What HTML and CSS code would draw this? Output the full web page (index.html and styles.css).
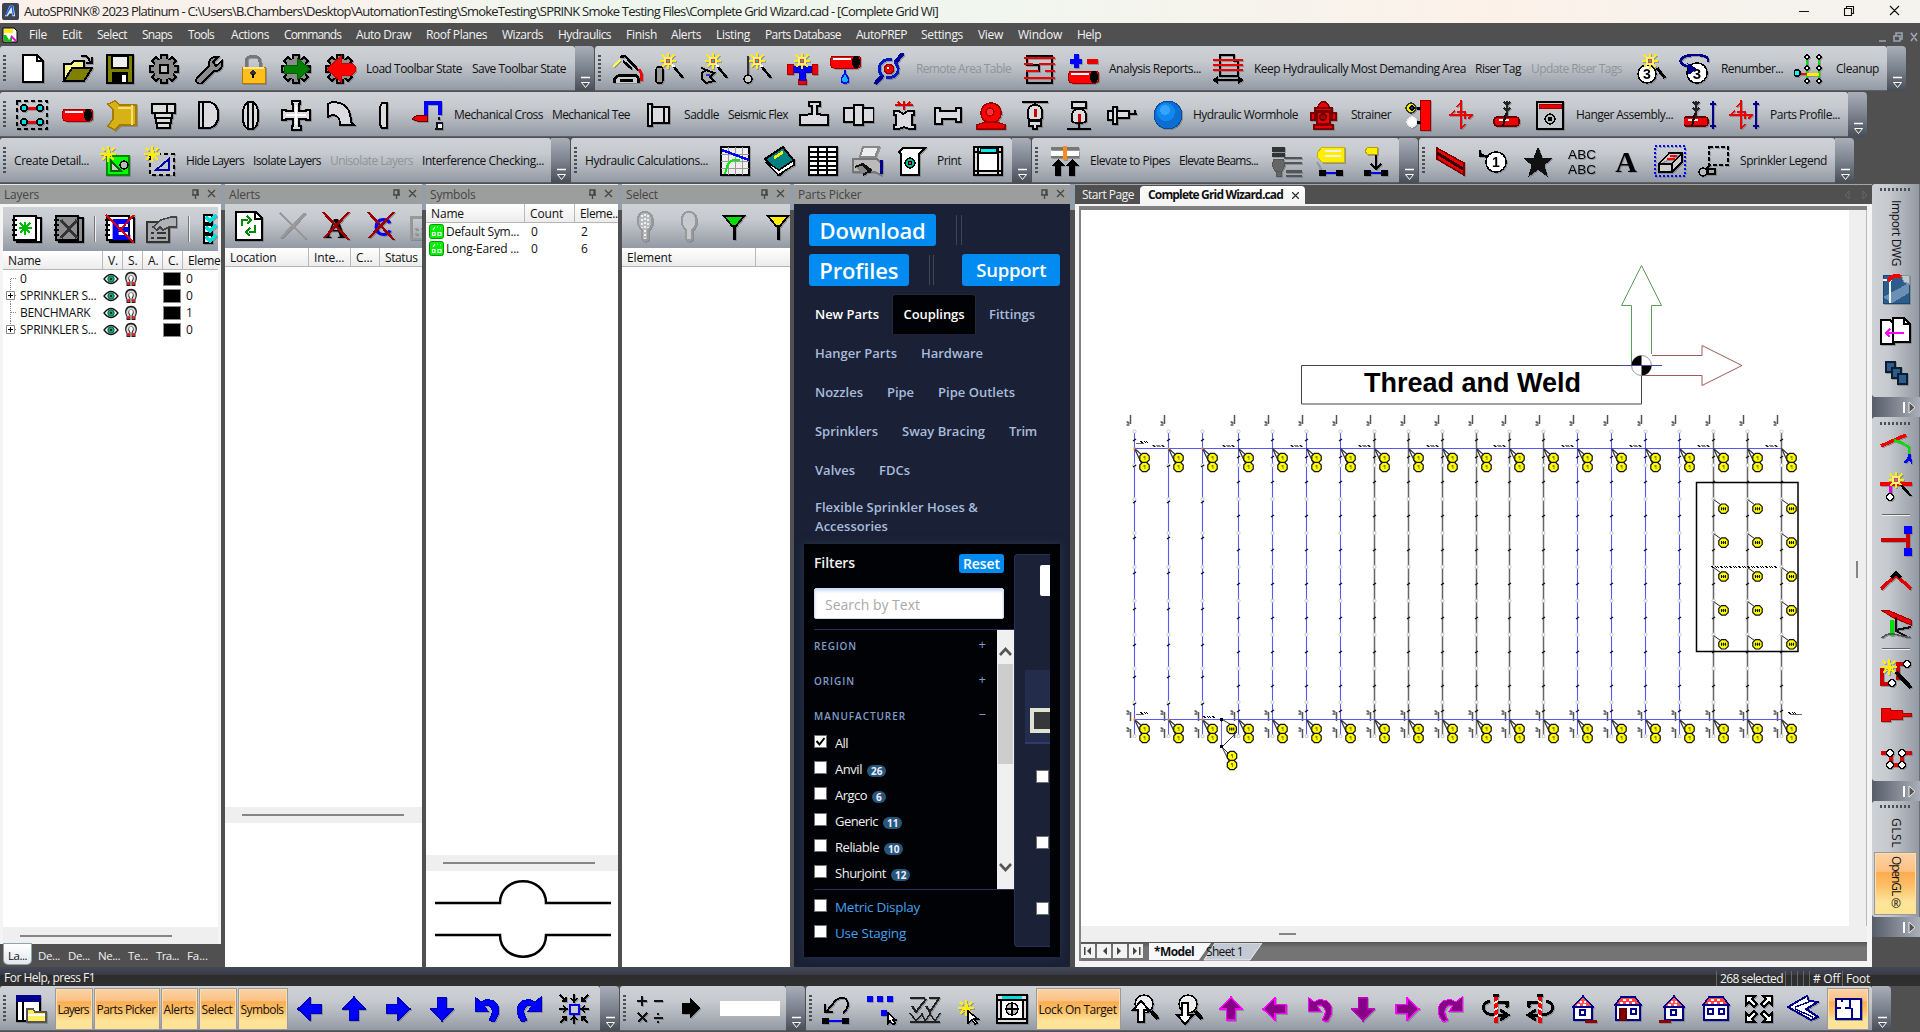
FILE: index.html
```html
<!DOCTYPE html>
<html lang="en">
<head>
<meta charset="utf-8">
<title>AutoSPRINK 2023 Platinum</title>
<link rel="stylesheet" href="styles.css">
</head>
<body>
<div class="app">
  <header class="titlebar">
    <svg class="app-logo" viewBox="0 0 18 18"><rect width="18" height="18" rx="2" fill="#3a4452"/><path d="M3 14 8 3h4l2 11h-3l-.5-3H8l-2 3z" fill="#dfe9f5"/><path d="M4 13 9 4h2l1 9" fill="none" stroke="#1c62d8" stroke-width="1.6"/></svg>
    <span class="title-text" data-w="914">AutoSPRINK® 2023 Platinum - C:\Users\B.Chambers\Desktop\AutomationTesting\SmokeTesting\SPRINK Smoke Testing Files\Complete Grid Wizard.cad - [Complete Grid Wi]</span>
    <svg class="win-ctl" viewBox="0 0 110 20"><path d="M4 10.500h10M49.500 7.500h7v7h-7zM51.500 7v-1.500h7v7h-2M95 5l9 9M104 5l-9 9" fill="none" stroke="#111" stroke-width="1.100"/></svg>
  </header>
  <nav class="menubar" id="menu">
    <svg class="doc-logo" viewBox="0 0 16 16"><path d="M1 1h11l3 3v11H1z" fill="#fff" stroke="#000"/><path d="M2 2h9v4H2z" fill="#ffef00"/><path d="M2 8h8v6H2z" fill="#00c800"/><path d="m4 8 3 5 3-5" fill="#fff"/><path d="m9 9 5 5" stroke="#f0c" stroke-width="2"/></svg>
  </nav>
  <div class="bar-row" id="row1"></div>
  <div class="bar-row" id="row2"></div>
  <div class="bar-row" id="row3"></div>

  <main class="work">
    <section class="panel layers">
      <h2><span>Layers</span><i class="pin"></i></h2>
      <div class="layers-frame">
        <div class="ptools" data-icons="-3:27 nbnew:44 nbx:40 |:12 nbe:38 props:44 |:12 checks:44"></div>
        <div class="lhead"><b>Name</b><b>V.</b><b>S.</b><b>A.</b><b>C.</b><b>Eleme</b></div>
        <div class="tree" id="tree"></div>
        <div class="hscroll"><i></i></div>
      </div>
      <div class="ptabs"><span class="on" data-w="19">La...</span><span data-w="22">De...</span><span data-w="22">De...</span><span data-w="22">Ne...</span><span data-w="20">Te...</span><span data-w="23">Tra...</span><span data-w="21">Fa...</span></div>
    </section>
    <section class="panel alerts">
      <h2><span>Alerts</span><i class="pin"></i></h2>
      <div class="ptools" data-icons="refresh:48 xgray:40 xa:46 xc:44 propsoff:44"></div>
      <div class="lhead"><b>Location</b><b>Inte...</b><b>C...</b><b>Status</b></div>
      <div class="fill"></div>
      <div class="hscroll"><i></i></div>
      <div class="lower"></div>
    </section>
    <section class="panel symbols">
      <h2><span>Symbols</span><i class="pin"></i></h2>
      <div class="lhead"><b>Name</b><b>Count</b><b>Eleme...</b></div>
      <div class="srow"><svg viewBox="0 0 15 15"><use href="#sym"/></svg><span data-w="73">Default Sym...</span><span>0</span><span>2</span></div>
      <div class="srow"><svg viewBox="0 0 15 15"><use href="#sym"/></svg><span data-w="73">Long-Eared ...</span><span>0</span><span>6</span></div>
      <div class="fill"></div>
      <div class="hscroll"><i></i></div>
      <svg class="preview" viewBox="0 0 192 96"><path d="M9 32h65c0-29 46-29 46 0h65M9 64h65c0 29 46 29 46 0h65" fill="none" stroke="#000" stroke-width="2.500"/></svg>
    </section>
    <section class="panel select">
      <h2><span>Select</span><i class="pin"></i></h2>
      <div class="ptools" data-icons="-1:3 bulb1:44 bulb2:44 fungreen:44 funyellow:44"></div>
      <div class="lhead"><b>Element</b><b></b></div>
      <div class="fill"></div>
    </section>
    <section class="panel picker">
      <h2><span>Parts Picker</span><i class="pin"></i></h2>
      <div class="pk">
        <div class="pk-btns">
          <button class="big w1"><span data-w="106">Download</span></button><i class="bars"></i>
        </div>
        <div class="pk-btns">
          <button class="big w2"><span data-w="79">Profiles</span></button><i class="bars"></i><button class="w3"><span data-w="70">Support</span></button>
        </div>
        <div class="cats">
          <div><a class="hot" data-w="64">New Parts</a><a class="cur"><span data-w="61">Couplings</span></a><a data-w="46">Fittings</a></div>
          <div><a data-w="82">Hanger Parts</a><a data-w="62">Hardware</a></div>
          <div><a data-w="48">Nozzles</a><a data-w="27">Pipe</a><a data-w="77">Pipe Outlets</a></div>
          <div><a data-w="63">Sprinklers</a><a data-w="83">Sway Bracing</a><a data-w="28">Trim</a></div>
          <div><a data-w="40">Valves</a><a data-w="31">FDCs</a></div>
          <div class="two"><a><span data-w="163">Flexible Sprinkler Hoses &amp;</span><br><span data-w="73">Accessories</span></a></div>
        </div>
        <div class="filters">
          <div class="fcol">
            <div class="ftop"><b data-w="41">Filters</b><button><span data-w="37">Reset</span></button></div>
            <div class="search"><span data-w="95">Search by Text</span></div>
            <div class="fscroll">
              <div class="flist">
                <h3><span data-w="43">REGION</span><i>+</i></h3>
                <h3><span data-w="41">ORIGIN</span><i>+</i></h3>
                <h3><span data-w="92">MANUFACTURER</span><i>−</i></h3>
                <label><i class="cb ck"></i><span data-w="13">All</span></label>
                <label><i class="cb"></i><span data-w="27">Anvil</span><em>26</em></label>
                <label><i class="cb"></i><span data-w="32">Argco</span><em>6</em></label>
                <label><i class="cb"></i><span data-w="43">Generic</span><em>11</em></label>
                <label><i class="cb"></i><span data-w="44">Reliable</span><em>10</em></label>
                <label><i class="cb"></i><span data-w="51">Shurjoint</span><em>12</em></label>
              </div>
              <div class="vbar"><svg viewBox="0 0 17 34"><path d="m3 25 5.500-6 5.500 6" fill="none" stroke="#555" stroke-width="2.600"/></svg><i></i><svg viewBox="0 0 17 34"><path d="m3 9 5.500 6 5.500-6" fill="none" stroke="#555" stroke-width="2.600"/></svg></div>
            </div>
            <label class="blue"><i class="cb"></i><span data-w="85">Metric Display</span></label>
            <label class="blue"><i class="cb"></i><span data-w="71">Use Staging</span></label>
          </div>
          <div class="rcol"><i class="wbox"></i><div class="hl"><i></i></div><i class="cb"></i><i class="cb"></i><i class="cb"></i></div>
        </div>
      </div>
    </section>
    <section class="doc">
      <div class="dtabs"><span class="st" data-w="52">Start Page</span><span class="act"><b data-w="135">Complete Grid Wizard.cad</b><svg viewBox="0 0 8 8"><path d="m0 0 8 8M8 0 0 8" stroke="#333" stroke-width="1.500"/></svg></span><svg class="arrs" viewBox="0 0 24 10"><path d="M5 1v8L1 5zM19 1v8l4-4z" fill="none" stroke="#666"/></svg></div>
      <div class="frame">
        <div class="canvas-wrap">
          <svg id="cad" viewBox="1081 210 768 716"></svg>
          <div class="cvbar"><i></i></div>
        </div>
        <div class="chbar"><i></i></div>
        <div class="sheets">
          <svg viewBox="0 0 62 15"><g fill="#f3f3f3"><path d="M0 0h14v14H0zM16 0h14v14H16zM32 0h14v14H32zM48 0h14v14H48z"/></g><path d="M3 3h1.500v8H3zM10 3v8L6 7zM26 3v8l-4-4zM36 3v8l4-4zM52 3v8l4-4zM58 3h1.500v8H58z" fill="#444"/></svg>
          <svg class="sheet-tabs" viewBox="0 0 114 18"><path d="M55 17h46l12-17H66z" fill="#c3cad4" stroke="#eee"/><path d="M0 0h62L50 17H0z" fill="#f7f8fb"/></svg>
          <b class="m" data-w="40">*Model</b><span class="s" data-w="37">Sheet 1</span>
        </div>
      </div>
    </section>
    <aside class="side" id="side"></aside>
  </main>

  <div class="status"><span data-w="91">For Help, press F1</span><span class="grow"></span><span class="cell" data-w="63">268 selected</span><i></i><i></i><i></i><i></i><span class="cell" data-w="27"># Off</span><span class="cell" data-w="24">Foot</span></div>
  <div class="bar-row bottom" id="row4"></div>
</div>
<svg class="defs"><defs><g id="sym"><rect x=".5" y=".5" width="14" height="14" rx="2" fill="#00f000" stroke="#009c00"/><path d="M3.500 8.500h2.500v3h-2.500zM9 8.500h3v3H9zM4 6l2-3M8 3h1M11 4h1" stroke="#fff" fill="none" stroke-width="1.200"/></g></defs></svg>
<script src="main.js"></script>
</body>
</html>
```
FILE: styles.css
```css
* { box-sizing: border-box; }
body { margin: 0; background: #505050; font: 12px/1 "Open Sans", "Noto Sans", sans-serif; color: #111; overflow: hidden; }
.app { width: 1920px; height: 1032px; display: flex; flex-direction: column; overflow: hidden; }
.defs { display: none; }
span, b { white-space: nowrap; }
i { font-style: normal; }

.titlebar { height: 23px; display: flex; align-items: center; padding-left: 2px; background: linear-gradient(90deg, #fbf0ea 0, #f8f2ec 18%, #eff6ee 30%, #f0f6ee 50%, #f6f3ec 66%, #fcf1e9 78%, #f6f2ec 90%, #f5f3ee 100%); }
.app-logo { width: 17px; height: 17px; }
.title-text { margin-left: 5px; font-size: 13px; color: #222; }
.win-ctl { width: 110px; height: 20px; margin-left: auto; margin-right: 15px; margin-bottom: 2px; }
.menubar { height: 23px; background: #505050; color: #f2f2f2; display: flex; align-items: center; padding-left: 2px; }
.doc-logo { width: 16px; height: 16px; margin-right: 11px; }
.mdi { margin-left: auto; margin-right: 1px; width: 40px; height: 12px; position: relative; top: 2px; }

.bar-row { height: 46px; display: flex; padding-bottom: 1px; gap: 1px; background: #505050; border-bottom: 0; }
.tb { display: flex; height: 45px; }
.tb-body { display: flex; align-items: center; background: linear-gradient(#ced1d6, #c6c9ce 35%, #b0b5bd 65%, #939aa4); border-radius: 3px 3px 0 0; border-bottom: 1px solid #59616d; overflow: hidden; padding-top: 1px; }
.tb svg, .side svg, .ptools svg { width: 32px; height: 32px; flex: none; display: block; filter: drop-shadow(1px 1px 0 rgba(110, 112, 116, .55)); }
.tb .grip { width: 3px; height: 28px; flex: none; background: repeating-linear-gradient(#4a4f57 0 2px, transparent 2px 4px); }
.tb .off { color: #909498; }
.tb-end { width: 19px; background: linear-gradient(#a9afb9, #7b838f 50%, #474d57); border-radius: 0 4px 0 0; padding-left: 1px; }
.tb .tb-end svg { width: 19px; height: 45px; filter: none; position: relative; top: 1px; }
.tb .label { display: block; line-height: 16px; flex: none; padding-top: 1px; }
.on-btn { height: 42px; flex: none; display: flex; align-items: center; justify-content: center; border: 1px solid #9a9b96; background: linear-gradient(#fbd2a6, #fcc183 30%, #fdac50 32%, #fdc168 55%, #fde49a 80%, #ffe48c); box-shadow: inset 0 0 0 1px #fddcae; }
.on-btn span { position: relative; left: -1px; top: 1px; }
.field { background: #fff; height: 15px; flex: none; }

.work { flex: 1; min-height: 0; display: flex; height: 783px; background: linear-gradient(#949eaa 0 26px, #505050 26px); }
.panel { display: flex; flex-direction: column; height: 783px; flex: none; background: #fff; margin-right: 4px; overflow: hidden; }
.panel h2 { margin: 0; height: 20px; flex: none; background: #9b9e9d; border-top: 1px solid #e8e8e8; font: 12px/19px "Open Sans", sans-serif; color: #454545; padding: 0 5px 0 4px; display: flex; justify-content: space-between; letter-spacing: -.2px; }
.pin svg { width: 26px; height: 18px; display: block; }
.layers { width: 221px; background: #505050; }
.alerts { width: 197px; margin-right: 4px; }
.symbols { width: 192px; }
.select { width: 168px; }
.picker { width: 276px; background: #1a2136; }
.layers-frame { border: 3px solid #f4f4f4; border-top-width: 3px; height: 740px; display: flex; flex-direction: column; background: #fff; border-bottom-width: 0; }
.ptools { height: 44px; flex: none; display: flex; align-items: center; background: linear-gradient(#ced1d6, #c6c9ce 35%, #939aa4); overflow: hidden; }
.ptools span { display: flex; justify-content: center; flex: none; }
.ptools .vs { width: 2px; height: 26px; background: #eee; border-left: 1px solid #777; }
.lhead { height: 19px; flex: none; display: flex; background: linear-gradient(#fff, #ececec); border-bottom: 1px solid #b5b5b5; }
.lhead b { font-weight: 400; line-height: 19px; border-right: 1px solid #b9b9b9; padding-left: 5px; flex: none; overflow: hidden; font-size: 12px; letter-spacing: -.15px; }
.layers .lhead b { width: 20px; }
.layers .lhead b:first-child { width: 100px; }
.layers .lhead b:last-child { width: 40px; border: 0; letter-spacing: -.4px; }
.alerts .lhead b:nth-child(1) { width: 84px; }
.alerts .lhead b:nth-child(2) { width: 42px; }
.alerts .lhead b:nth-child(3) { width: 29px; }
.alerts .lhead b:nth-child(4) { width: 44px; border: 0; letter-spacing: -.4px; }
.symbols .lhead b:nth-child(1) { width: 99px; }
.symbols .lhead b:nth-child(2) { width: 50px; }
.symbols .lhead b:nth-child(3) { border: 0; letter-spacing: -.4px; }
.select .lhead b:first-child { width: 134px; }
.select .lhead b:last-child { border: 0; }
.tree { flex: 1; }
.trow { display: flex; height: 17px; align-items: center; }
.trow svg.br { width: 17px; height: 17px; }
.trow .nm { width: 83px; letter-spacing: -.3px; }
.trow svg.ey { width: 16px; height: 12px; }
.trow svg.mg { width: 16px; height: 16px; margin-left: 4px; }
.trow .sw { width: 18px; height: 14px; background: #000; border: 1px solid #8a8a8a; margin: 0 5px 0 24px; }
.hscroll { height: 17px; flex: none; background: #efefef; display: flex; align-items: center; padding-left: 17px; }
.hscroll i { width: 152px; height: 2px; background: #858585; }
.alerts .fill { height: 540px; flex: none; }
.alerts .hscroll i { width: 162px; }
.alerts .hscroll { height: 16px; }
.symbols .hscroll { height: 16px; }
.fill { flex: 1; }
.lower { flex: 1; }
.srow { height: 17px; display: flex; align-items: center; }
.srow svg { width: 15px; height: 15px; margin: 0 2px 0 3px; }
.srow span:nth-of-type(1) { width: 85px; }
.srow span:nth-of-type(2) { width: 50px; }
.preview { width: 192px; height: 96px; flex: none; }
.ptabs { display: flex; color: #f2f2f2; padding-left: 4px; height: 23px; align-items: flex-start; }
.ptabs span { padding: 6px 4px 0; height: 20px; font-size: 11.500px; }
.ptabs .on { background: linear-gradient(#fff, #e3e8ee); color: #111; border-radius: 0 0 4px 4px; box-shadow: 0 0 0 1px #8fa3a8; margin-right: 3px; }

.pk { padding: 10px 10px 0; font-family: "Open Sans", sans-serif; height: 763px; }
.pk button { background: #028bf0; border: 0; border-radius: 3px; color: #fff; font: 600 18.500px/32px "Open Sans", sans-serif; height: 32px; padding: 0; text-align: center; overflow: hidden; }
.pk button.big { font-size: 22px; line-height: 33px; }
.pk-btns { display: flex; height: 40px; padding-left: 5px; }
.w1 { width: 127px; } .w2 { width: 100px; } .w3 { width: 98px; margin-left: 28px; }
.bars { width: 6px; height: 30px; margin: 1px 0 0 20px; border: solid #3d4658; border-width: 0 1px; }
.cats { height: 250px; font-weight: 600; font-size: 13px; color: #a9bbdb; }
.cats > div { display: flex; height: 39px; gap: 24px; padding-left: 11px; align-items: center; }
.cats > div:first-child { height: 40px; gap: 13px; }
.cats a { white-space: nowrap; }
.cats .hot { color: #fff; }
.cats .cur { background: #010205; color: #fff; width: 84px; height: 40px; line-height: 39px; text-align: center; border: 1px solid #23293a; border-bottom: 0; border-radius: 4px 4px 0 0; }
.cats > .two { line-height: 19px; height: 38px; margin-top: 8px; }
.filters { display: flex; height: 413px; background: #010205; box-shadow: 0 0 8px #28324c; color: #f1f1f1; padding: 10px; }
.fcol { width: 200px; flex: none; }
.ftop { display: flex; height: 34px; justify-content: space-between; padding-right: 10px; }
.ftop b { font-weight: 600; font-size: 14px; line-height: 17px; }
.pk .ftop button { width: 45px; height: 19px; font-size: 14px; line-height: 18px; }
.search { width: 190px; height: 31px; background: #fff; border: 1px solid #cfdcf2; border-radius: 2px; box-shadow: inset 0 2px 3px #cfdcf5; color: #a9a9a9; font-size: 14px; line-height: 31px; padding-left: 10px; margin-bottom: 10px; }
.fscroll { display: flex; height: 261px; border: solid #263157; border-width: 1px 0; }
.flist { width: 183px; }
.flist h3 { margin: 0; height: 35px; display: flex; justify-content: space-between; padding-right: 11px; color: #7f9dcb; font: 600 10px/33px "Open Sans", sans-serif; }
.flist h3 i { font-size: 13px; font-weight: 400; line-height: 29px; }
.filters label { display: flex; height: 26px; align-items: flex-start; font-size: 13px; }
.filters label span { margin-left: 8px; line-height: 17px; }
.cb { width: 13px; height: 13px; background: #fff; border: 1px solid #707070; flex: none; display: block; }
.cb svg { display: block; width: 11px; height: 11px; }
.filters em { font: 700 10px/12px "Open Sans", sans-serif; background: #27567a; border-radius: 7px; padding: 0 4px; margin: 4px 0 0 5px; color: #eef; }
.filters .blue { color: #45a1ee; font-size: 13.500px; }
.fscroll + .blue { margin-top: 9px; }
.vbar { width: 17px; background: #f0f0f0; display: flex; flex-direction: column; }
.vbar svg { width: 17px; height: 34px; }
.vbar i { height: 100px; background: #cdcdcd; margin: 0 1px 91px; }
.rcol { flex: 1; background: #1b2238; border: 1px solid #263157; border-right: 0; border-radius: 4px 0 0 4px; overflow: hidden; padding-top: 10px; }
.wbox { display: block; width: 10px; height: 31px; background: #fff; margin-left: 25px; border-radius: 2px 0 0 2px; }
.hl { height: 74px; background: #232c4b; margin: 74px 0 26px 10px; border-bottom: 2px solid #2f3b68; padding: 38px 0 0 5px; }
.hl i { display: block; height: 25px; border: 4px solid #dfe3d2; border-right: 0; background: #36373a; }
.rcol .cb { margin: 0 0 53px 21px; }

.doc { width: 797px; height: 783px; flex: none; display: flex; flex-direction: column; margin-left: 1px; }
.dtabs { height: 20px; background: #505050; border-top: 1px solid #a5a5a5; display: flex; align-items: center; color: #f2f2f2; padding: 1px 0 0 7px; }
.dtabs .st { margin-right: 6px; }
.dtabs .act { background: linear-gradient(#fff, #f4f4f4); color: #111; width: 165px; height: 18px; border-radius: 4px 4px 0 0; display: flex; align-items: center; padding-left: 8px; gap: 9px; }
.dtabs .act svg { width: 7px; height: 7px; }
.arrs { width: 24px; height: 10px; margin-left: auto; margin-right: 4px; }
.frame { height: 763px; border: solid #f4f4f4; border-width: 2px 5px 6px 4px; box-shadow: inset 2px 4px 0 #818181, inset 0 0 0 1px #bbb; padding: 4px 0 0 2px; background: #efefef; }
.canvas-wrap { display: flex; height: 716px; }
#cad { width: 768px; height: 716px; background: #fff; display: block; }
.cvbar { width: 17px; background: #efefef; display: flex; align-items: center; padding: 2px 0 0 7px; }
.cvbar i { width: 2px; height: 17px; background: #858585; }
.chbar { height: 16px; background: #efefef; padding: 7px 0 0 198px; }
.chbar i { display: block; width: 17px; height: 2px; background: #858585; }
.sheets { height: 19px; background: linear-gradient(#555, #747474 30%); display: flex; align-items: center; }
.sheets > svg:first-child { width: 62px; height: 15px; }
.sheet-tabs { width: 114px; height: 18px; margin-left: 6px; margin-right: -109px; }
.sheets b, .sheets span { position: relative; line-height: 16px; }
.sheets .s { margin-left: 12px; }

.side { width: 48px; margin-left: 0; background: #505050; flex: none; }
.side-tb { width: 48px; display: flex; flex-direction: column; align-items: center; background: linear-gradient(90deg, #ced1d6, #c6c9ce 35%, #939aa4); border-radius: 3px 0 0 3px; overflow: hidden; border-right: 1px solid #69717c; }
.side .grip { width: 31px; height: 3px; flex: none; background: repeating-linear-gradient(90deg, #4a4f57 0 2px, transparent 2px 4px); }
.side .sep { width: 28px; height: 2px; background: #eee; border-top: 1px solid #666; flex: none; }
.side .vt { writing-mode: vertical-rl; line-height: 16px; width: 16px; flex: none; }
.side .vt span { left: 0; top: 0; }
.side .on-btn { width: 43px; height: 63px; }
.side-end { height: 20px; background: linear-gradient(90deg, #565d68, #a9afb9); }
.side .side-end svg { width: 48px; height: 20px; filter: none; }

.status { height: 19px; flex: none; background: linear-gradient(#454957, #383b45 40%, #2c2c2c 45%, #303030); display: flex; align-items: center; color: #f2f2f2; padding: 3px 48px 0 4px; }
.status .grow { flex: 1; }
.status i { width: 6px; height: 15px; border-left: 1px solid #666; }
.status .cell { border-left: 1px solid #666; padding-left: 3px; line-height: 15px; margin-right: 2px; }
.bottom { background: #505050; }
```
FILE: main.js
```js
const p = (d, f = 'none', s = '#000', w = 2) => `<path d="${d}" fill="${f}" stroke="${s}" stroke-width="${w}"/>`;
const c = (x, y, r, f = '#fff', s = '#000', w = 1.500) => `<circle cx="${x}" cy="${y}" r="${r}" fill="${f}" stroke="${s}" stroke-width="${w}"/>`;
const r = (x, y, w, h, f = '#fff', s = '#000', k = 2) => `<rect x="${x}" y="${y}" width="${w}" height="${h}" fill="${f}" stroke="${s}" stroke-width="${k}"/>`;
const g = (t, s) => `<g transform="${t}">${s}</g>`;
const tx = (x, y, z, s, k = '') => `<text x="${x}" y="${y}" font-size="${z}" font-weight="700" text-anchor="middle" font-family="Liberation Sans" ${k}>${s}</text>`;
const star = (x, y, mid = 1) => g(`translate(${x} ${y})`, p('M0-8V-4M0 4V8M-8 0h4M4 0h4M-6-6l3 3M3 3l3 3M6-6 3-3M-3 3l-3 3', 'none', '#ffee00', 2) + (mid ? r(-3, -3, 6, 6, '#f33', '#fff176', 1.500) + r(-1, -1, 2, 2, '#0cc', 'none', 0) : p('M0-4V4M-4 0h8', 'none', '#ffee00', 3)));
const wand = p('M19 12l3 2', 'none', '#fff', 2) + p('M21 14l9 11', 'none', '#000', 2.500);
const gear = g('translate(16 16)', [0, 45, 90, 135].map(a => `<g transform="rotate(${a})">${r(-3, -14, 6, 28, '#8c8c8c', '#000', 1.800)}</g>`).join('') + c(0, 0, 10, '#8c8c8c', '#8c8c8c', 1));
const pipe = (y, x = 1) => p(`M${x + 4} ${y}h24c4 0 4 12 0 12h-24c-5 0-5-12 0-12`, '#f00', '#900', 1) + p(`M${x + 3} ${y + 3}h18`, 'none', '#fff', 1.800) + `<ellipse cx="${x + 26}" cy="${y + 6}" rx="4" ry="6"/>`;
const arrow = (a, f, e) => g(`rotate(${a} 16 16)`, p('M16 4 27 16h-6.500v11h-9V16H5z', f, e, 1.500));
const undo = (f, e) => p('M5 4v14h13l-4-5c8-2 11 6 5 14l5 2c9-11 5-24-9-22l-4 2z', f, e, 1);
const flip = s => g('matrix(-1 0 0 1 32 0)', s);
const body = s => p(s, '#dcdce0', '#000', 2);
const house = s => p('M7 13h18v14H7z', '#fff', '#00008b', 2) + s;
const roofS = p('M6 14l10-11 10 11z', '#f55', '#00008b', 1.500) + p('M10 12h3M16 12h3M13 9h2M17 9h2', 'none', '#fff', 2);
const roofL = p('M3 12l6-8h14l6 8z', '#f44', '#00008b', 1.500) + p('M8 10h3M14 10h3M20 10h3M11 7h3M17 7h3', 'none', '#fff', 2);
const page = p('M6 2h14l6 6v21H6z', '#fff', '#000', 2) + p('M20 2v6h6');
const nb = (f = '#fff') => p('M6 5h24v24H6z', f, '#000', 2) + p('M3 3h22v24H3z', f, '#000', 2) + p('M1 7h5M1 12h5M1 17h5M1 22h5', 'none', '#000', 2);
const hanger = p('M16 2v16M13 3l3 3 3-3M13 9l3 3 3-3', 'none', '#222', 2) + p('M6 18h19c4 0 4 9 0 9H6c-4 0-4-9 0-9', '#e00', '#600', 1.500) + p('M8 21h10', 'none', '#fff', 1.500) + p('M15 14l-3 13', 'none', '#111', 2);
const cross = p('M16 1v29M4 16h24M16 3l-4 5M16 30l4-5M5 16l5-4M27 16l-4 4M12 13h8v7', 'none', '#e00', 1.500);
const funnel = f => p('M6 6h20l-8 10h-4z', f, '#000', 2) + p('M5 6h22', 'none', '#000', 2.500) + p('M16 16v14', 'none', '#000', 3);
const rot = p('M22 8c11 3 8 13-4 14H8', 'none', '#000', 3) + p('M3 9h12M6 15c-3-3 0-6 5-6M12 17l-8 5 8 5', 'none', '#000', 3) + p('M16 3v27', 'none', '#e00', 4) + p('M14 8l4 2M14 15l4 2M14 22l4 2', 'none', '#fff', 2) + p('M13 2h6', 'none', '#000', 3);
const dash = (s, d) => s.replace('/>', ` stroke-dasharray="${d}"/>`);

const I = {
  new: page,
  open: p('M3 28V11h7l3-3h10v6', '#fff68a', '#000') + p('M3 28l8-13h20l-8 13z', '#808000', '#000') + p('M20 3q7-2 9 6M31 4v6h-6', 'none', '#000', 1.800),
  save: p('M3 2h26v28H3z', '#808000', '#000') + r(8, 3, 16, 12, '#eee') + r(9, 20, 14, 9, '#000') + r(18, 22, 3, 6, '#fff', '#fff', 1),
  gear: gear + r(12, 12, 8, 8, '#bbb', '#000', 1.500),
  wrench: p('M4 25l12-12c-1-6 3-10 9-9l-5 5 3 4 6-5c1 7-3 11-8 10L9 30c-5 2-7-2-5-5z', '#8c8c8c', '#000', 1.800),
  lock: p('M9 16V9c0-8 14-8 14 0v7', 'none', '#777', 3) + r(5, 14, 23, 16, '#ffbf1c', '#b27a00', 1) + p('M6 15h21', 'none', '#ffe88b', 2) + c(16, 20, 2, '#333', '#333') + p('M16 21v4'),
  gearG: gear + p('M4 12h13V5l13 11-13 11v-7H4z', '#008000', '#006000', 1), gearR: gear + p('M28 10H17V3L3 16l14 13v-7h11l3-3v-6z', '#f00', '#c00', 1),
  torch: p('M2 14l7-7', 'none', '#ff4', 2.500) + p('M9 4l5-1 14 15M12 8l9 8', 'none', '#000', 2.500) + p('M3 30c0-6 4-8 8-8h11c5 0 6 4 6 8M9 27h13', '#ccc', '#000', 3) + p('M28 16l2 4v8', 'none', '#f00', 3),
  w1: p('M5 14h3c3 0 3 16 0 16H5c-3 0-3-16 0-16', '#999', '#000') + star(15, 8) + wand,
  w2: p('M4 15l4 1M5 20l4-3 8 3-4 4 4 4-8 2-4-4z', '#aaa', '#000') + p('M9 22h4', 'none', '#33c') + star(16, 8) + wand,
  w3: p('M7 3v18', 'none', '#333', 2) + c(7, 26, 4, '#ccc') + star(16, 8) + wand,
  w4: p('M1 11h6v10H1zM26 11h6v10h-6zM12 26h8v5h-8z', '#e00', '#a00', 1) + p('M7 13h18v6h-6v8h-6v-8H7z', '#00f', '#00a', 1) + star(16, 8),
  drop: pipe(3) + p('M16 17v5', 'none', '#00f') + p('M16 20c-6 8-4 10 0 10s6-2 0-10', '#0bf', '#00f', 1.500),
  orbit: p('M2 31l8-9M22 10l8-10', 'none', '#009', 4) + p('M9 23C2 14 9 5 19 7M22 9c7 9 1 17-9 15', 'none', '#0018c8', 3) + c(16, 16, 4.500, '#e00', '#800') + c(15, 15, 1, '#fff', '#fff', 0),
  ladder: p('M4 3h25v27H4V18h12v-6H4z', 'none', '#000', 2) + p('M1 5h31M1 11h9M16 11h16M3 18h13M22 18h10M1 25h31', 'none', '#e00', 1.500),
  plus: p('M9 1v14M3 8h12', 'none', '#00f', 5) + p('M20 8h11', 'none', '#e00', 5) + pipe(18),
  ladder2: p('M8 2h14v6h4v15H8z', 'none', '#000', 2) + p('M1 7h30M1 12h30M1 17h30', 'none', '#e00', 1.500) + p('M3 27h26M6 24l-4 3 4 3M26 24l4 3-4 3', 'none', '#000', 2),
  three: c(12, 21, 9) + tx(12, 26, 14, '3') + star(15, 8) + p('M22 15l8 10', 'none', '#000', 3),
  three2: c(18, 20, 10) + tx(18, 26, 15, '3') + p('M11 14c-14-2-12-12 4-12 11 0 15 2 14 7', 'none', '#00008b', 2.500) + p('M9 11l8 5-7 5z', '#00008b', '#00008b', 1),
  clean: p('M13 4v22M25 4v22', 'none', '#0d0', 1.800) + p('M4 21h9', 'none', '#f00', 2) + p('M13 21h12', 'none', '#fe0', 3) + c(3, 20, 3, '#0ff') + [4, 15, 28].map(y => c(13, y, 2) + c(25, y, 2)).join(''),
  hg: dash(p('M1 2h30v28H1z'), '4 3') + [9, 23].map(y => p(`M6 ${y}h20`, 'none', '#e00', 3) + c(8, y, 3, '#0dd') + c(24, y, 3, '#0dd')).join(''),
  pipe: pipe(10), yel: p('M3 5l7-3 5 4h16v20H15l-5 5-7-4 5-7V11z', '#d8b117', '#a47d00', 1.500) + p('M13 9h14M27 6v20', 'none', '#f7e070', 2),
  cap: p('M4 5h23v9H4zM7 14h17v5H7zM8 19h15v5H8zM9 24h13v5H9z', '#ddd', '#000', 2) + p('M19 5v9'),
  d: body('M6 3h9c14 0 14 26 0 26H6zM10 4v24'), oval: body('M13 3c-7 4-7 24 0 27h5c7-3 7-23 0-27zM13 4v25M18 4v25'),
  plusf: body('M12 2h8v3h-1v7h7v-1h4v10h-4v-1h-7v7h2v4h-9v-4h1v-7H6v1H2V11h4v1h7V5h-1z') + p('M16 6v20M6 16h20', 'none', '#fff', 2),
  elbow: body('M4 5l4-2c14 0 19 9 19 20l3 3H16c0-7-2-10-8-10l-4 2z'), slim: body('M14 4h5v25h-5l-2-3V8z'),
  hose: p('M15 18V4h14v12', 'none', '#00f', 3.500) + p('M1 20l5-4h10v6H6z', '#e00', '#600', 1) + p('M28 18v3M26 24h6v6h-6zM24 30h9', '#eee', '#111', 1.800),
  conn: body('M7 5h4v22H7zM11 8h12v16H11zM23 8h5v16h-5'), tee: body('M11 3h11v4h-3v8l7 1h4v10h-4H6H2V16h4l8-1V7h-3z'), union: body('M2 9h10v14H2zM12 6h9v20h-9zM21 9h11v14H21z'),
  valve: p('M7 6h18M16 2v9M10 3l3 3M22 3l-3 3', 'none', '#d00', 1.500) + body('M6 12h5l4 3 5-3h6v4h-2v10h3v4h-6l-5-2-5 2H6v-4h2V16H6z'), tee2: body('M3 9h5v3h16V9h5v14h-5v-3H10v5H3z'),
  alarm: c(16, 14, 10, '#f00', '#900') + c(15, 13, 4, '#f33', '#a00') + p('M2 30v-4l8-3h12l8 3v4z', '#e00', '#900', 1.500),
  spr1: p('M3 3h26M16 3v4', 'none', '#000') + p('M9 12c0-8 14-8 14 0v6c0 4-14 4-14 0z', '#ddd') + p('M16 10v8', 'none', '#c00', 3) + body('M10 22h12v5h-4v3h-4v-3h-4z'),
  spr2: body('M9 3h14v6H9z') + p('M9 16c0-8 14-8 14 0v5c0 4-14 4-14 0z', '#ddd') + p('M16 15v8', 'none', '#c00', 3) + p('M16 25v5M4 30h24'),
  side1: body('M2 12h5v9H2zM7 8h4v17H7zM11 12h12v7H11z') + p('M23 15h8M29 11v4', 'none', '#000'),
  ball: c(16, 16, 14, '#0a6fd0', '#0b4c98', 1) + c(14, 13, 9, '#1188ee', 'none', 0) + c(13, 11, 5, '#35a4ff', 'none', 0),
  hyd: p('M11 9c0-8 11-8 11 0zM8 9h17v3H8zM10 13h13v12H10zM7 26h19v4H7zM4 14h4v7H4zM25 14h4v7h-4z', '#e00', '#700', 1.800) + c(16, 18, 3, '#a00', '#600'),
  rb: r(16, 1, 10, 30, '#f00', '#900', 1) + c(7, 9, 5, '#ee0', '#333') + c(8, 9, 2, '#22a') + c(8, 23, 5, '#fff', '#eee') + p('M13 9h4M13 23h4', 'none', '#000', 3),
  cross, hanger, win: p('M3 3h26v27H3z', '#c4c7cb') + r(5, 5, 22, 4, '#e00', '#900', 1) + c(16, 20, 5, '#bbb') + c(16, 20, 1.500, '#000'),
  hangerB: g('translate(-4 0)', hanger) + p('M29 2v28M26 5h6M26 27h6', 'none', '#00008b', 2), crossB: g('translate(-3 0)', cross) + p('M28 2v28M25 5h6M25 27h6', 'none', '#00008b', 2),
  detG: p('M7 11h22v19H7z', '#0f0', '#080', 2) + p('M11 26V16l10 10z', '#ccc', '#060', 1.500) + c(24, 20, 4, '#bbb') + star(8, 9, 0),
  detB: dash(p('M6 9h24v21H6z', '#c2c5ca'), '4 3') + p('M12 25l13-11v11z', 'none', '#00a', 2) + star(8, 9, 0),
  chart: p('M2 2h28v28H2z', '#eee') + p('M9 2v28M16 2v28M23 2v28M2 9h28M2 16h28M2 23h28', 'none', '#999', 1) + p('M3 5l27 10', 'none', '#00f', 2.500) + p('M6 29q2-12 8-14l7 0', 'none', '#0e0', 2),
  book: p('M2 14L20 2l11 14-14 14z', '#008080', '#000') + p('M3 17l12 13 16-10v-5l-15 10z', '#fff', '#000', 1.500) + p('M11 13l9-6', 'none', '#fe0', 3),
  table: p('M2 2h28v28H2z', '#fff') + p('M2 7h28M2 12h28M2 16h28M2 21h28M2 25h28M11 2v28M20 2v28', 'none', '#000', 1.800),
  printer: p('M9 12l3-10h16l-4 10z', '#eee', '#888') + p('M2 14h24l4 4v12l-6-3H2z', '#bbb', '#777') + p('M4 22l8-3 8 6-8 5M12 20l8 8', '#888', '#111', 2) + p('M30 15v14', 'none', '#00008b', 3),
  scroll: p('M4 7l4-4h22l-6 6v21H6V9z', '#fff', '#000', 2) + c(15, 18, 5, '#0b9', '#000') + c(15, 18, 1.500, '#e33'),
  frame: p('M2 2h28v28H2z', '#ddd') + p('M2 7h28M2 26h28M6 2v28M26 2v28', 'none', '#000', 1.500) + r(8, 3, 16, 4, '#0ee', '#000', 1) + r(6, 8, 20, 18),
  elev: p('M2 3h28', 'none', '#777', 3) + p('M2 8h28', 'none', '#fff', 5) + p('M2 12h28', 'none', '#777', 2) + p('M16 1v14', 'none', '#ff8a1c', 4) + p('M9 14l7 7h-4v10H6V21H2zM23 14l7 7h-4v10h-6V21h-4z', '#000', '#000', 0),
  beams: p('M2 2h12v4H2zM2 8h12v3H2z', '#333', '#333', 1) + p('M4 14h9l2 6-3 6H5l-3-6zM6 26h5v5H6z', '#666', '#555', 1) + p('M16 26h16M16 31h16', 'none', '#555', 3) + p('M14 13h18M14 18h18', 'none', '#555', 2),
  tag: p('M3 8l5-6h22v15H8l-5-5z', '#ffee00', '#c8b400', 1) + p('M11 6h16M11 11h16', 'none', '#eee', 2) + p('M3 17l4 8', 'none', '#999', 1.500) + p('M9 28h16', 'none', '#00f', 2.500) + r(6, 26, 5, 4, '#000') + r(23, 26, 5, 4, '#000'),
  tag2: p('M6 6l3-4h9v7H8z', '#fe0', '#b89f00', 1) + p('M17 10v12M12 19l5 5 5-5', 'none', '#000', 2) + p('M11 28h14', 'none', '#00f', 2) + r(6, 26, 5, 4, '#000') + r(23, 26, 5, 4, '#000'),
  beam: p('M3 3l27 15v12L3 14z', '#e00', '#700', 1.500) + p('M3 8l26 16', 'none', '#300', 3),
  one: c(19, 17, 10) + tx(19, 22, 14, '1') + p('M10 12L3 9M3 5v6h6', 'none', '#000', 2.500), star: p('M16 3l4 10h10l-8 7 3 11-9-7-9 7 3-11-8-7h10z', '#111', '#111', 1),
  abc: tx(16, 14, 13.500, 'ABC', 'textLength="28"').replaceAll('"700"', '"400"') + tx(16, 29, 13.500, 'ABC', 'textLength="28"').replaceAll('"700"', '"400"'), A: tx(16, 27, 30, 'A').replace('Liberation Sans', 'Liberation Serif'),
  box: dash(p('M1 1h30v30H1z', 'none', '#00f', 2), '2 2') + p('M5 19L15 8h13v9L18 27H5zM5 19h13l10-11M18 19v8', '#ccc', '#000', 1.500) + p('M13 14h8M16 11h7', 'none', '#e00', 1.500),
  leg: dash(p('M11 2h19v18H11z'), '4 2') + c(5, 27, 4, '#bbb') + p('M10 24h7v5h-7zM12 20l-4 4', '#aaa'),
  wins: r(2, 3, 23, 25, '#fff') + r(2, 3, 23, 5, '#00008b', '#00008b') + p('M8 8v20') + p('M12 29V16h6l2 3h11v10z', '#ffee55', '#555', 1.500) + p('M13 22h17', 'none', '#fff', 2),
  L: arrow(-90, '#0000ff', '#0000c0'), U: arrow(0, '#0000ff', '#0000c0'), R: arrow(90, '#0000ff', '#0000c0'), D: arrow(180, '#0000ff', '#0000c0'), Z: undo('#0000ff', '#0000c0'), Y: flip(undo('#0000ff', '#0000c0')),
  pL: arrow(-90, '#850085', '#f0f'), pU: arrow(0, '#850085', '#f0f'), pR: arrow(90, '#850085', '#f0f'), pD: arrow(180, '#850085', '#b0b'), pZ: undo('#850085', '#f0f'), pY: flip(undo('#850085', '#f0f')),
  tgt: r(11.500, 11.500, 9, 9, '#ccc', '#00f') + p('M16 8V1M13 5l3 4 3-4M16 24v7M13 27l3-4 3 4M8 16H1M5 13l4 3-4 3M24 16h7M27 13l-4 3 4 3M2 2l6 6M8 4v4H4M30 2l-6 6M24 4v4h4M2 30l6-6M4 24h4v4M30 30l-6-6M28 24h-4v4', 'none', '#000', 1.500),
  math: p('M8 3v10M3 8h10M20 8h9M4 20l9 9M13 20l-9 9M20 25h9M24 20v2M24 28v2', 'none', '#111', 2), blk: p('M8 10h8V5l10 10-10 10v-5H8z', '#000', '#000', 1),
  ang: p('M9 28h14', 'none', '#00f', 2) + r(3, 26, 5, 4, '#000') + r(23, 26, 5, 4, '#000') + p('M6 19L16 7q9-6 12 3 0 6-5 10M5 11v8h8', 'none', '#000', 2),
  dots: p('M2 3h6v6H2zM12 3h6v6h-6zM22 3h6v6h-6zM16 17h6v6h-6z', '#00f', '#00f', 0) + p('M23 20v10l2-2 3 4 2-2-2-3h3z', '#fff', '#000', 1.500),
  hatch: p('M1 5h15M20 5h11M1 29h30M3 13l4 6 10-13M17 13l4 6 9-14', 'none', '#222', 2) + p('M1 20l6 8 6-7 3 7 5-7 5 7 5-8', 'none', '#222', 1.500),
  sel: star(14, 15, 0) + p('M16 18v12l4-3 3 4 2-1-3-4h4z', '#fff', '#000', 1.500), view: p('M1 2h30v28H1z', '#ddd') + r(5, 7, 22, 19) + p('M6 4h20', 'none', '#0dd', 3) + p('M1 7h30M1 26h30') + c(16, 16, 6, '#bbb') + p('M16 10v6h6M10 16h6v6', '#fff', '#000', 1.500),
  zi: c(16, 11, 9, '#eee') + p('M23 18l7 8', 'none', '#000', 4) + p('M10 29V17H5l8-9 8 9h-5v12z', '#fff', '#000', 2), zo: c(16, 11, 9, '#eee') + p('M23 18l7 8', 'none', '#000', 4) + p('M10 10v12H5l8 9 8-9h-5V10z', '#fff', '#000', 2),
  rot, rot2: flip(rot),
  h1: house(r(13, 17, 5, 5, '#fff', '#00008b')) + roofS + p('M18 28h12', 'none', '#800', 3), h2: p('M4 12h24v15H4z', '#fff', '#00008b') + roofL + r(8, 16, 6, 11, '#800', '#600') + r(19, 16, 5, 5, '#fff', '#00008b'),
  h3: house(r(13, 17, 5, 5, '#fff', '#00008b')) + roofS + p('M1 28h12', 'none', '#800', 3), h4: p('M4 12h24v15H4z', '#fff', '#00008b') + roofL + r(8, 16, 5, 5, '#fff', '#00008b') + r(19, 16, 5, 5, '#fff', '#00008b'),
  exp: [0, 90, 180, 270].map(a => g(`rotate(${a} 16 16)`, p('M3 3h9l-3 3 5 5-3 3-5-5-3 3z', '#fff', '#000', 1.600))).join(''),
  iso: p('M1 14L20 3l2 5 9 1-12 7 12 8-7 3z', '#fff', '#00008b', 2) + p('M8 14l14-5M8 16l18 8', 'none', '#00008b', 1.500), plan: p('M4 6h25v20H4z', '#fff', '#00008b', 2.500) + p('M4 15h5M13 15h5V6M10 6v3M20 15v11', 'none', '#00008b', 2.500),
  nbnew: nb() + p('M14 9v13M8 15h13M9 10l10 10M19 10L9 20', 'none', '#0b0', 2), nbx: nb('#8e8e90') + p('M8 7l16 18M24 7L8 25', 'none', '#333', 3), nbe: nb() + tx(17, 26, 28, 'E', 'fill="#00f" stroke="#00f" stroke-width="2"') + p('M2 2l28 28M30 2L15 18', 'none', '#d00', 2),
  props: r(2, 9, 22, 20, '#a5a7ab', '#333') + p('M6 20h3M12 20h9M6 25h3M12 25h9', 'none', '#333', 2) + p('M8 14l8-7 10-3h6v10h-8l-6 3-3-3-3 3z', '#b0b2b6', '#444', 1.500), propsoff: r(2, 7, 24, 22, 'none', '#999') + p('M6 19h3M12 19h10M6 24h3M12 24h10', 'none', '#999', 2),
  checks: [2, 12, 22].map(y => r(3, y, 8, 8, '#eee') + p(`M5 ${y + 2}l4 4 6-6`, 'none', '#0dd', 3)).join(''),
  refresh: p('M3 2h20l6 6v22H3z', '#fff') + p('M22 2v7h6') + p('M9 16v-6h6M14 6l4 4-4 4M22 15v7h-6M17 18l-4 4 4 4', 'none', '#080', 2), xgray: p('M3 3l26 26M28 3L4 28', 'none', '#999', 2.500),
  xa: tx(16, 28, 29, 'A').replace('Liberation Sans', 'Liberation Serif') + p('M3 2l26 28M29 2L4 28', 'none', '#900', 2.500), xc: tx(18, 26, 26, 'C', 'fill="#00f"') + p('M3 2l26 28M29 2L4 28', 'none', '#900', 2.500),
  bulb1: p('M12 20c-7-6-5-18 3-18s10 12 3 18v9l-3 2-3-2z', '#b7babd', '#999') + dash(p('M12 5v13M15 4v25M18 5v13', 'none', '#eee', 2), '2 2'), bulb2: p('M12 20c-7-6-5-18 3-18s10 12 3 18v9l-3 2-3-2z', '#c6c9cd', '#999'), fungreen: funnel('#0d0'), funyellow: funnel('#fe0'),
  dwg: p('M3 2h26v28H3z', '#2c5c8c', '#1b466f', 1) + p('M21 2h8v9l-5-2z', '#bcc8d6', '#899', 1) + p('M3 24L29 10v10L12 30z', '#6c8fb4', 'none', 0) + p('M10 6v24M3 7h9', 'none', '#eef4fa', 2) + p('M8 8q6-8 13-4', 'none', '#e00', 4),
  docs: p('M1 5h9l4 5v19H1z', '#fff') + p('M13 3h11l6 6v18H13z', '#fff') + p('M24 3v6h6') + p('M6 18h18M10 14l-4 4 4 4', 'none', '#f0f', 2.500), cubes: [[6, 3], [12, 9], [18, 15]].map(a => r(a[0], a[1], 9, 10, '#2c5c8c', '#0d1c2e', 1.800)).join(''),
  arm: p('M1 14L26 3', 'none', '#e00', 3.500) + p('M14 8l8 3 7 4v7', 'none', '#0d0', 2.500) + p('M29 22v4M25 31l4-5 4 5', 'none', '#00f', 3), wz: p('M0 12h32', 'none', '#e00', 4) + p('M10 13v8', 'none', '#d0d', 3) + c(10, 25, 3.500) + star(16, 8) + p('M21 13l10 11', 'none', '#000', 2.500),
  teeR: p('M1 16h27M28 6v20', 'none', '#c00', 3.500) + r(25, 3, 6, 6, '#00f', '#00f') + r(25, 25, 6, 6, '#00f', '#00f'), vee: p('M1 24L16 10l15 14', 'none', '#d00', 3.500) + p('M11 13l5-5 5 5', 'none', '#000', 4),
  knife: p('M1 2l9 1 21 9v5L12 9z', '#e00', '#900', 1) + p('M12 12v16', 'none', '#0d0', 4) + p('M16 9v14l12 6M16 22l15-3', 'none', '#111', 2) + p('M2 30q5-6 16-3t12 2', 'none', '#555', 1.500), wiz2: p('M2 10v16h10M18 22V6h8', 'none', '#c00', 3.500) + c(27, 6, 3.500) + c(12, 25, 3.500) + star(9, 9, 0) + p('M16 14l15 16', 'none', '#000', 4),
  syr: p('M1 9h9v2h12v3h9v3H22v3H10v2H1z', '#e00', '#a00', 1), quad: p('M1 8h10v12h11V8h10', 'none', '#d00', 3.500) + [[10, 8], [22, 8], [10, 20], [22, 20]].map(a => c(a[0], a[1], 3.500)).join('')
};
const svg = n => `<svg viewBox="0 0 32 32" shape-rendering="crispEdges">${I[n] || ''}</svg>`;
const END = '<div class="tb-end"><svg viewBox="0 0 19 45"><path d="M5 30.500h9" stroke="#fff" stroke-width="1.500"/><path d="M5.500 35.500h8l-4 5z" fill="#555" stroke="#fff"/></svg></div>';

/* Each bar: [left, body right edge, items]. Icons carry a centre x; labels carry left, right and text. */
const bars = {
  row1: [[0, 575, [['new', 33], ['open', 77], ['save', 120], ['gear', 164], ['wrench', 209], ['lock', 253], ['gearG', 296], ['gearR', 340], [366, 462, 'Load Toolbar State'], [472, 566, 'Save Toolbar State']]],
    [595, 1887, [['torch', 627], ['w1', 669], ['w2', 713], ['w3', 757], ['w4', 802], ['drop', 845], ['orbit', 889], [916, 1011, 'Remote Area Table', 1], ['ladder', 1039], ['plus', 1083], [1109, 1201, 'Analysis Reports...'], ['ladder2', 1228], [1254, 1466, 'Keep Hydraulically Most Demanding Area'], [1475, 1521, 'Riser Tag'], [1531, 1622, 'Update Riser Tags', 1], ['three', 1651], ['three2', 1695], [1721, 1783, 'Renumber...'], ['clean', 1810], [1836, 1879, 'Cleanup']]]],
  row2: [[0, 1848, [['hg', 32], ['pipe', 77], ['yel', 121], ['cap', 164], ['d', 209], ['oval', 251], ['plusf', 296], ['elbow', 340], ['slim', 384], ['hose', 427], [454, 543, 'Mechanical Cross'], [552, 630, 'Mechanical Tee'], ['conn', 657], [684, 719, 'Saddle'], [728, 788, 'Seismic Flex'], ['tee', 814], ['union', 858], ['valve', 904], ['tee2', 948], ['alarm', 991], ['spr1', 1035], ['spr2', 1079], ['side1', 1122], ['ball', 1168], [1193, 1298, 'Hydraulic Wormhole'], ['hyd', 1323], [1351, 1391, 'Strainer'], ['rb', 1420], ['cross', 1461], ['hanger', 1507], ['win', 1550], [1576, 1673, 'Hanger Assembly...'], ['hangerB', 1700], ['crossB', 1744], [1770, 1840, 'Parts Profile...']]]],
  row3: [[0, 551, [[14, 89, 'Create Detail...'], ['detG', 116], ['detB', 160], [186, 244, 'Hide Layers'], [253, 321, 'Isolate Layers'], [330, 413, 'Unisolate Layers', 1], [422, 544, 'Interference Checking...']]],
    [571, 1012, [[585, 708, 'Hydraulic Calculations...'], ['chart', 735], ['book', 779], ['table', 823], ['printer', 867], ['scroll', 911], [937, 961, 'Print'], ['frame', 988]]],
    [1032, 1399, [['elev', 1065], [1090, 1170, 'Elevate to Pipes'], [1179, 1258, 'Elevate Beams...'], ['beams', 1286], ['tag', 1330], ['tag2', 1375]]],
    [1419, 1835, [['beam', 1450], ['one', 1493], ['star', 1538], ['abc', 1582], ['A', 1626], ['box', 1670], ['leg', 1714], [1740, 1827, 'Sprinkler Legend']]]],
  row4: [[0, 600, [['wins', 31], [55, 93, 'Layers', 2], [94, 160, 'Parts Picker', 2], [161, 198, 'Alerts', 2], [199, 237, 'Select', 2], [238, 288, 'Symbols', 2], ['L', 310], ['U', 354], ['R', 398], ['D', 442], ['Z', 486], ['Y', 530], ['tgt', 574]]],
    [620, 786, [['math', 650], ['blk', 690], [720, 780, '', 3]]],
    [806, 1872, [['ang', 836], ['dots', 881], ['hatch', 925], ['sel', 968], ['view', 1012], [1036, 1121, 'Lock On Target', 2], ['zi', 1144], ['zo', 1188], ['pU', 1231], ['pL', 1275], ['pZ', 1319], ['pD', 1363], ['pR', 1407], ['pY', 1451], ['rot2', 1496], ['rot', 1540], ['h1', 1583], ['h2', 1628], ['h3', 1674], ['h4', 1716], ['exp', 1759], ['iso', 1803], [1827, 1869, 'plan', 4]]]]
};
for (const id in bars) {
  document.getElementById(id).innerHTML = bars[id].map(([x0, x1, items]) => {
    let x = x0 + 6, h = '<i class="grip" style="margin-left:3px"></i>';
    for (const it of items) {
      const icon = typeof it[0] === 'string', a = icon ? it[1] - 16 : it[0], b = icon ? it[1] + 16 : it[1];
      const ml = `margin-left:${a - x}px`;
      if (icon) h += svg(it[0]).replace('<svg', `<svg style="${ml}"`);
      else if (it[3] === 2) h += `<div class="on-btn" style="${ml};width:${b - a}px"><span data-w="${b - a - 7}">${it[2]}</span></div>`;
      else if (it[3] === 3) h += `<div class="field" style="${ml};width:${b - a}px"></div>`;
      else if (it[3] === 4) h += `<div class="on-btn" style="${ml};width:${b - a}px">${svg(it[2])}</div>`;
      else h += `<div class="label${it[3] ? ' off' : ''}" style="${ml};width:${b - a}px"><span data-w="${b - a}">${it[2]}</span></div>`;
      x = b;
    }
    return `<div class="tb"><div class="tb-body" style="width:${x1 - x0}px">${h}</div>${END}</div>`;
  }).join('');
}

let mx = 29;
document.getElementById('menu').innerHTML += [[29, 47, 'File'], [62, 82, 'Edit'], [97, 127, 'Select'], [142, 172, 'Snaps'], [188, 214, 'Tools'], [231, 269, 'Actions'], [284, 341, 'Commands'], [356, 411, 'Auto Draw'], [426, 487, 'Roof Planes'], [502, 543, 'Wizards'], [558, 611, 'Hydraulics'], [626, 657, 'Finish'], [671, 701, 'Alerts'], [716, 750, 'Listing'], [765, 841, 'Parts Database'], [856, 907, 'AutoPREP'], [921, 963, 'Settings'], [978, 1003, 'View'], [1018, 1062, 'Window'], [1077, 1101, 'Help']]
  .map(([a, b, t]) => { const s = `<div style="margin-left:${a - mx}px;width:${b - a}px"><span data-w="${b - a}">${t}</span></div>`; mx = b; return s; }).join('')
  + '<svg class="mdi" viewBox="0 0 40 12"><path d="M0 10h7M15 5h6v5h-6zM17 5V2h6v6h-2M32 2l6 8M38 2l-6 8" fill="none" stroke="#9aa4b2" stroke-width="1.600"/></svg>';

document.querySelectorAll('.ptools').forEach(el => {
  el.innerHTML = el.dataset.icons.split(' ').map(t => {
    const [n, w] = t.split(':');
    if (n === '|') return `<span style="width:${w}px"><i class="vs"></i></span>`;
    return I[n] ? `<span style="width:${w}px">${svg(n)}</span>` : '<span style="width:2px"></span>';
  }).join('');
});
document.querySelectorAll('.pin').forEach(e => e.innerHTML = '<svg viewBox="0 0 26 18"><path d="M3 5h5v5H3zM2 10h7M5.500 10v4M7 5v5M18 5l7 7M25 5l-7 7" fill="none" stroke="#444" stroke-width="1.300"/></svg>');
document.querySelector('.ck').innerHTML = '<svg viewBox="0 0 11 11"><path d="m1.500 5 3 3.500L9.500 2" fill="none" stroke="#000" stroke-width="2"/></svg>';

document.getElementById('tree').innerHTML = [['0', 0, '0'], ['SPRINKLER S...', 1, '0'], ['BENCHMARK', 0, '1'], ['SPRINKLER S...', 1, '0']].map(([n, k, e], i) =>
  `<div class="trow"><svg class="br" viewBox="0 0 17 17"><path d="M7.500 ${i ? 0 : 9}V${i === 3 ? 9 : 17}M8 8.500h6" stroke="#888" stroke-dasharray="1 1"/>${k ? '<path d="M3.500 4.500h8v8h-8z" fill="#fff" stroke="#888"/><path d="M5 8.500h5M7.500 6v5" stroke="#000"/>' : ''}</svg><span class="nm">${n}</span><svg class="ey" viewBox="0 0 16 12"><path d="M1 6q7-9 14 0-7 9-14 0z" fill="#fff" stroke="#111" stroke-width="1.300"/><circle cx="8" cy="6" r="3.200" fill="#12a08a" stroke="#063"/><circle cx="8" cy="6" r="1"/></svg><svg class="mg" viewBox="0 0 16 16"><path d="M5.500 15v-4C-1 0 17 0 10.500 11v4" fill="none" stroke="#222" stroke-width="4"/><path d="M5.500 12v-1C0 1 16 1 10.500 11v1" fill="none" stroke="#ddd" stroke-width="2"/><path d="M5.500 11v3M10.500 11v3" stroke="#e22" stroke-width="2.500"/></svg><i class="sw"></i><span>${e}</span></div>`).join('');

/* Right-hand vertical bars: [body bottom, cap bottom, items]; each item is [kind, centre y, text, height]. */
let sy = 184;
document.getElementById('side').innerHTML = [
  [397, 417, [['grip', 189], ['vt', 233, 'Import DWG', 66], ['dwg', 289], ['docs', 331], ['cubes', 375]]],
  [781, 801, [['grip', 423], ['arm', 448], ['wz', 488], ['sep', 515], ['teeR', 540], ['vee', 581], ['knife', 624], ['sep', 649], ['wiz2', 674], ['syr', 715], ['quad', 761]]],
  [917, 937, [['grip', 806], ['vt', 833, 'GLSL', 30], ['on', 883, 'OpenGL®', 55]]]
].map(([y1, y2, items]) => {
  const h0 = y1 - sy; let y = sy, h = '';
  for (const [k, cy, t, w] of items) {
    const hh = { grip: 3, sep: 2, vt: w, on: 63 }[k] || 32, a = Math.round(cy - hh / 2), m = `margin-top:${a - y}px`;
    if (k === 'grip' || k === 'sep') h += `<i class="${k}" style="${m}"></i>`;
    else if (k === 'vt') h += `<div class="vt" style="${m};height:${w}px"><span data-h="${w}">${t}</span></div>`;
    else if (k === 'on') h += `<div class="on-btn" style="${m}"><div class="vt"><span data-h="${w}">${t}</span></div></div>`;
    else h += svg(k).replace('<svg', `<svg style="${m}"`);
    y = a + hh;
  }
  sy = y2;
  return `<div class="side-tb" style="height:${h0}px">${h}</div><div class="side-end"><svg viewBox="0 0 48 20"><path d="M32 5v11" stroke="#fff" stroke-width="2"/><path d="M37 5v11l6-5.500z" fill="#555" stroke="#eee"/></svg></div>`;
}).join('');

/* Piping plan */
const cols = [1134.500, 1168.500, 1202.500, 1238.500, 1272.500, 1306.500, 1340.500, 1374.500, 1408.500, 1442.500, 1476.500, 1509.500, 1543.500, 1577.500, 1611.500, 1645.500, 1679.500, 1713.500, 1747.500, 1781.500];
const tagAt = (x, y, k = 0) => `<path d="M${x - 4.700} ${y - 2}l2.700-2.700h4l2.700 2.700v4l-2.700 2.700h-4l-2.700-2.700z" fill="#ff0" stroke="#111" stroke-width="1.200"/><path d="${k ? `M${x - 2} ${y - 1.500}v3M${x} ${y - 1.500}v3M${x + 2} ${y - 1.500}v3M${x - 1} ${y}h2` : `M${x - 1} ${y - 1}h2M${x} ${y + 1}h1`}" fill="none" stroke="#111" stroke-width="1.100"/>`;
const speck = (x, y) => `<path d="M${x} ${y}h2M${x + 1} ${y + 1}h2M${x} ${y + 3}h3" stroke="#000"/>`;
const words = (x, y, n) => `<path d="M${x} ${y + .5}h${n}M${x + 1} ${y + 1.500}h${n}" stroke="#000" stroke-dasharray="2 2 1 1 1 2"/>`;
let s = '';
cols.forEach((x, i) => {
  const blue = i < 7 || (i > 12 && i < 17);
  s += `<path d="M${x} 431V737" stroke="${blue ? '#5858f8' : '#666'}" stroke-width="${blue ? 1.100 : 1.500}"/>`;
  for (let y = 431.500; y < 740; y += 33.850) s += `<circle cx="${x}" cy="${y}" r="1.600" fill="#fff" stroke="#bbb" stroke-width=".8"/>`;
  const t = i < 3 ? [440, 466, 502, 538, 573, 609, 645, 677, 704] : [440, 457, 482, 516, 550, 584, 618, 652, 686, 711];
  t.forEach(y => s += `<path d="M${x - 1.500} ${y + 1}l3-2" stroke="#111" stroke-width="1.300"/>`);
  if (i !== 2) s += `<path d="M${x - 4} 415v9" stroke="#555" stroke-width="1.500"/>` + speck(x - 8, 422);
  s += `<path d="M${x - 4} 712v9M${x - 4} 729v9" stroke="#555" stroke-width="1.500"/>` + speck(x - 8, 711) + speck(x - 8, 728);
  if (i % 2) s += words(x - 16, 445, 11);
});
s += '<path d="M1134 448.500H1781M1134 719.500H1781" stroke="#5858f8" fill="none"/>';
cols.forEach((x, i) => {
  for (const y of [448.500, 719.500]) {
    s += `<path d="M${x} ${y}l8 7M${x} ${y}l8 17" stroke="#333" stroke-width="1.200"/>` + tagAt(x + 10, y + 9.500) + tagAt(x + 10, y + 18.500);
    if (i < 3) s += `<path d="M${x - 1} ${y}h2" stroke="#f80" stroke-width="2"/>`;
  }
  if (i > 16) for (let k = 0; k < 5; k++) s += `<path d="M${x} ${499.500 + 34 * k}l7 5" stroke="#222"/>` + tagAt(x + 10, 508.700 + 33.900 * k, 1);
});
s += words(1140, 441, 8) + words(1140, 712, 8) + words(1788, 712, 8) + '<path d="M1136 443.500h8M1136 714.500h8M1790 714.500h12" stroke="#666"/>' + words(1711, 566, 66) + words(1203, 716, 12)
  + '<path d="M1221.500 719V747M1221.500 719l15 9M1222 747l15-15M1222 747l8 16M1222 747l9 9" stroke="#334" fill="none"/><path d="M1221.500 722v23" stroke="#66f"/><path d="M1220 718h3v3h-3zM1220 745h3v3h-3z"/>' + tagAt(1231.700, 729, 1) + tagAt(1232, 756) + tagAt(1232, 765)
  + '<rect x="1696.500" y="482.500" width="101.500" height="169" fill="none" stroke="#000" stroke-width="1.500"/>'
  + '<path d="M1301.500 365.500H1641.500V404H1301.500z" fill="none" stroke="#444"/><text x="1364" y="392" textLength="217" lengthAdjust="spacingAndGlyphs" font-family="Liberation Sans" font-weight="700" font-size="27">Thread and Weld</text>'
  + '<path d="M1631.500 365V305.500h-10l20-40 20 40h-10V354" fill="none" stroke="#5a9c5a"/><path d="M1652 355.500h50v-10l40 20-40 20v-10h-60" fill="none" stroke="#a05a5a"/>'
  + '<circle cx="1641.500" cy="365.500" r="10" fill="#fff" stroke="#999"/><path d="M1641.500 365.500v-10a10 10 0 0 0-10 10zM1641.500 365.500v10a10 10 0 0 0 10-10z"/><path d="M1621 365.500h41" stroke="#4848a0"/>';
document.getElementById('cad').innerHTML = s;

/* Track each caption out (or in) to its given width. */
document.querySelectorAll('[data-w],[data-h]').forEach(e => {
  const v = e.dataset.h, w = +(v || e.dataset.w), n = e.textContent.length;
  const range = document.createRange(); range.selectNodeContents(e);
  const b = range.getBoundingClientRect(), cur = v ? b.height : b.width;
  if (n) e.style.letterSpacing = ((w - cur) / n).toFixed(3) + 'px';
});
```
